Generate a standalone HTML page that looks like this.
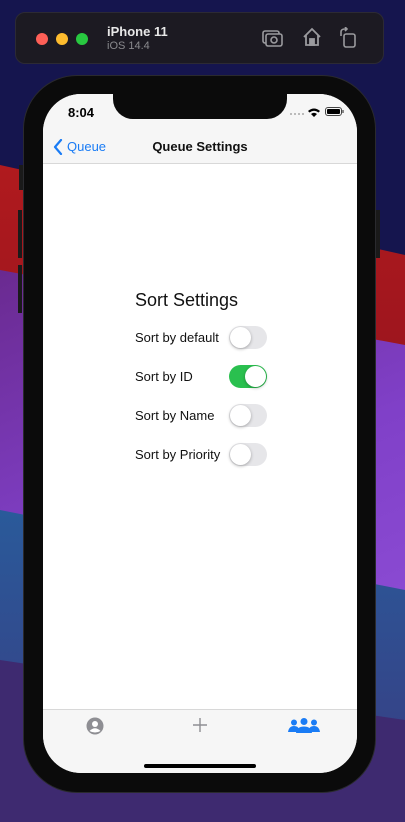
<!DOCTYPE html>
<html><head><meta charset="utf-8">
<style>
*{margin:0;padding:0;box-sizing:border-box}
html,body{width:405px;height:822px;overflow:hidden}
body{position:relative;font-family:"Liberation Sans",sans-serif;background:#161650}
.tb{position:absolute;left:15px;top:12px;width:369px;height:52px;background:#1c1a22;border-radius:10px;border:1px solid #2c2a34}
.dot{position:absolute;top:20px;width:12px;height:12px;border-radius:50%}
.phone{position:absolute;left:23px;top:75px;width:353px;height:718px;background:#0b0b0b;border-radius:54px;border:1px solid #2a2a2e}
.btn{position:absolute;background:#1a1a1a;width:4px}
.screen{position:absolute;left:43px;top:94px;width:314px;height:679px;background:#fff;border-radius:38px;overflow:hidden}
.notch{position:absolute;left:70px;top:0;width:174px;height:25px;background:#0b0b0b;border-radius:0 0 20px 20px}
.nav{position:absolute;left:0;top:0;width:314px;height:70px;background:#f6f6f6;border-bottom:1px solid #d8d8d8}
.tab{position:absolute;left:0;top:615px;width:314px;height:64px;background:#f6f6f6;border-top:1px solid #d8d8d8}
.row{position:absolute;left:92px;font-size:13px;color:#111}
.sw{position:absolute;left:186px;width:38px;height:23px;border-radius:12px;background:#e6e6e9}
.sw::after{content:"";position:absolute;left:1px;top:1px;width:21px;height:21px;border-radius:50%;background:#fff;box-shadow:0 1px 3px rgba(0,0,0,.3)}
.sw.on{background:#2ac04f}
.sw.on::after{left:16px}
</style></head><body>
<svg style="position:absolute;left:0;top:0" width="405" height="822">
<defs>
<linearGradient id="r" x1="0" y1="0" x2="0" y2="1"><stop offset="0" stop-color="#b01a1e"/><stop offset="1" stop-color="#6e0a1e"/></linearGradient>
<linearGradient id="p" x1="0" y1="0" x2="0.3" y2="1"><stop offset="0" stop-color="#6a2a90"/><stop offset="0.5" stop-color="#8040c8"/><stop offset="1" stop-color="#9050d8"/></linearGradient>
<linearGradient id="b" x1="0" y1="0" x2="0" y2="1"><stop offset="0" stop-color="#2a5a9a"/><stop offset="1" stop-color="#3a3a80"/></linearGradient>
</defs>
<rect width="405" height="822" fill="#15154e"/>
<polygon points="0,165 405,255 405,822 0,822" fill="url(#r)"/>
<polygon points="0,270 405,345 405,822 0,822" fill="url(#p)"/>
<polygon points="0,510 405,590 405,822 0,822" fill="url(#b)"/>
<polygon points="0,660 405,720 405,822 0,822" fill="#3e2a70"/>
</svg>
<div class="tb">
<div class="dot" style="left:20px;background:#fe5f57"></div>
<div class="dot" style="left:40px;background:#febc2e"></div>
<div class="dot" style="left:60px;background:#28c840"></div>
<div style="position:absolute;left:91px;top:11px;color:#e8e8e8;font-weight:bold;font-size:13px">iPhone 11</div>
<div style="position:absolute;left:91px;top:27px;color:#8a8a8e;font-size:11px">iOS 14.4</div>
<svg style="position:absolute;left:246px;top:15px" width="22" height="20" viewBox="0 0 22 20" fill="none" stroke="#9a9a9e" stroke-width="1.6"><rect x="1" y="3" width="16" height="12" rx="2"/><rect x="4" y="6" width="16" height="12" rx="2" fill="#1c1a22"/><circle cx="12" cy="12" r="3"/></svg>
<svg style="position:absolute;left:286px;top:14px" width="20" height="20" viewBox="0 0 20 20" fill="none" stroke="#9a9a9e" stroke-width="1.8"><path d="M2 10 L10 2 L18 10 M4 8 V18 H16 V8"/><rect x="8" y="12" width="4" height="6" fill="#9a9a9e"/></svg>
<svg style="position:absolute;left:323px;top:14px" width="18" height="22" viewBox="0 0 18 22" fill="none" stroke="#9a9a9e" stroke-width="1.6"><rect x="5" y="7" width="11" height="13" rx="2"/><path d="M2 9 V5 Q2 2 6 2 H8 M6 0 L8 2 L6 4"/></svg>
</div>
<div class="phone"></div>
<div class="btn" style="left:19px;top:165px;height:25px"></div>
<div class="btn" style="left:18px;top:210px;height:48px"></div>
<div class="btn" style="left:18px;top:265px;height:48px"></div>
<div class="btn" style="left:376px;top:210px;height:48px"></div>
<div class="screen">
<div class="nav">
<div style="position:absolute;left:25px;top:11px;font-size:13px;font-weight:bold;color:#000">8:04</div>
<div style="position:absolute;left:247px;top:19px;width:14px;height:2px;border-top:2px dotted #bbb"></div>
<svg style="position:absolute;left:264px;top:13px" width="14" height="10" viewBox="0 0 14 10"><path d="M1 4 Q7 -1 13 4 L11.5 5.5 Q7 2 2.5 5.5Z M4 7 Q7 4.5 10 7 L7 10Z" fill="#000"/></svg>
<div style="position:absolute;left:282px;top:13px;width:17px;height:9px;border:1px solid #444;border-radius:3px;padding:1px"><div style="width:100%;height:100%;background:#000;border-radius:1px"></div></div>
<div style="position:absolute;left:299px;top:16px;width:1.5px;height:3px;background:#888"></div>
<svg style="position:absolute;left:10px;top:45px" width="10" height="16" viewBox="0 0 10 16"><path d="M8 1 L2 8 L8 15" fill="none" stroke="#1a7cf5" stroke-width="2.2" stroke-linecap="round" stroke-linejoin="round"/></svg>
<div style="position:absolute;left:24px;top:45px;font-size:13px;color:#1a7cf5">Queue</div>
<div style="position:absolute;left:0;width:314px;text-align:center;top:45px;font-size:13px;font-weight:bold;color:#111">Queue Settings</div>
</div>
<div class="notch"></div>
<div style="position:absolute;left:92px;top:196px;font-size:18px;color:#111">Sort Settings</div>
<div class="row" style="top:236px">Sort by default</div><div class="sw" style="top:232px"></div>
<div class="row" style="top:275px">Sort by ID</div><div class="sw on" style="top:271px"></div>
<div class="row" style="top:314px">Sort by Name</div><div class="sw" style="top:310px"></div>
<div class="row" style="top:353px">Sort by Priority</div><div class="sw" style="top:349px"></div>
<div class="tab">
<svg style="position:absolute;left:43px;top:7px" width="18" height="18" viewBox="0 0 18 18"><circle cx="9" cy="9" r="8.5" fill="#8e8e93"/><circle cx="9" cy="7" r="3" fill="#fff"/><path d="M3.5 14 Q9 8.5 14.5 14 Q9 17 3.5 14Z" fill="#fff"/></svg>
<svg style="position:absolute;left:149px;top:7px" width="16" height="16" viewBox="0 0 16 16"><path d="M8 1V15M1 8H15" stroke="#8e8e93" stroke-width="1.4"/></svg>
<svg style="position:absolute;left:245px;top:8px" width="32" height="16" viewBox="0 0 32 16" fill="#1a7cf5"><circle cx="6" cy="4.5" r="3"/><circle cx="16" cy="3.5" r="3.5"/><circle cx="26" cy="4.5" r="3"/><path d="M0 14 Q1 8 6 8 Q10 8 11 11 L10 14Z M22 14 L21 11 Q22 8 26 8 Q31 8 32 14Z M8 15 Q9 8.5 16 8.5 Q23 8.5 24 15Z"/></svg>
<div style="position:absolute;left:101px;top:54px;width:112px;height:4px;background:#000;border-radius:2px"></div>
</div>
</div>
</body></html>
